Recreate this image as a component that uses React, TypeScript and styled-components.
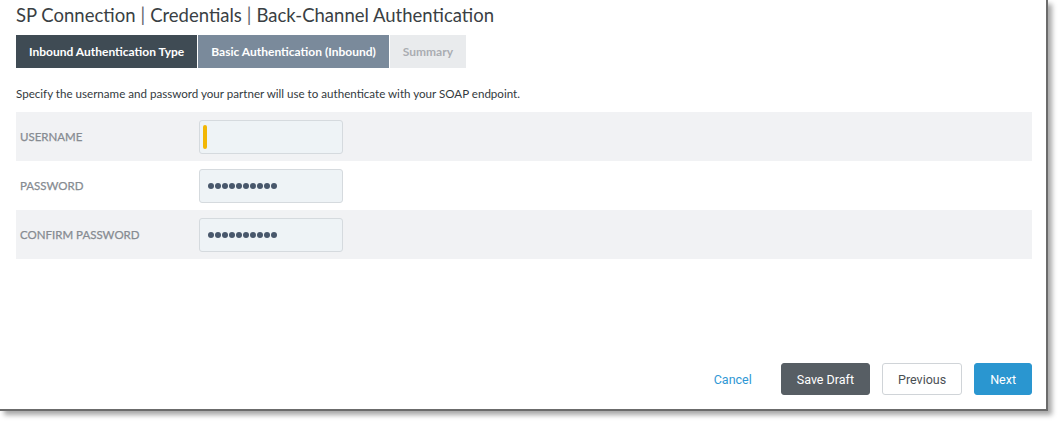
import React from 'react';
import styled, { createGlobalStyle } from 'styled-components';

const GlobalStyle = createGlobalStyle`
  html, body {
    margin: 0;
    padding: 0;
    background: #ffffff;
  }
  body {
    font-family: 'Lato', 'Open Sans', sans-serif;
  }
`;

const Page = styled.div`
  width: 1058px;
  height: 421px;
  overflow: hidden;
`;

const Panel = styled.div`
  box-sizing: border-box;
  width: 1048px;
  height: 411px;
  background: #ffffff;
  border-right: 2px solid #6b6b6b;
  border-bottom: 2px solid #6b6b6b;
  box-shadow: 4px 4px 5px rgba(0, 0, 0, 0.35);
  padding: 0 14px 14px 16px;
  display: flex;
  flex-direction: column;
`;

const Title = styled.h1`
  margin: 3px 0 0;
  font-size: 18.5px;
  font-weight: 400;
  line-height: 24px;
  color: #3a3f44;
`;

const Sep = styled.span`
  color: #5f656b;
  margin: 0 5px;
`;

const Tabs = styled.div`
  display: flex;
  gap: 1px;
  margin-top: 8px;
`;

const Tab = styled.div<{ variant: 'active' | 'current' | 'pending' }>`
  height: 33px;
  padding: 0 13px;
  display: flex;
  align-items: center;
  font-size: 12px;
  font-weight: 700;
  background: ${(p) =>
        p.variant === 'active' ? '#3f4b54' : p.variant === 'current' ? '#7a8a9b' : '#e9ebed'};
  color: ${(p) => (p.variant === 'pending' ? '#a9adb2' : '#ffffff')};
`;

const Intro = styled.p`
  margin: 18px 0 0;
  font-size: 11.6px;
  line-height: 16px;
  color: #333a40;
`;

const Rows = styled.div`
  margin-top: 10px;
  display: flex;
  flex-direction: column;
`;

const Row = styled.div<{ shaded: boolean }>`
  height: 49px;
  display: grid;
  grid-template-columns: 179px 144px;
  align-items: center;
  background: ${(p) => (p.shaded ? '#f1f2f4' : '#ffffff')};
  padding-left: 4px;
`;

const Label = styled.div`
  font-size: 11.5px;
  font-weight: 400;
  color: #868b91;
  text-transform: uppercase;
  -webkit-text-stroke: 0.25px #868b91;
`;

const Field = styled.div`
  box-sizing: border-box;
  width: 144px;
  height: 34px;
  background: #eef3f6;
  border: 1px solid #d5dade;
  border-radius: 3px;
  display: flex;
  align-items: center;
  padding-left: 3px;
`;

const Caret = styled.div`
  width: 4px;
  height: 24px;
  border-radius: 2px;
  background: #f2b705;
`;

const Dots = styled.div`
  display: flex;
  gap: 1px;
  padding-left: 5px;
`;

const Dot = styled.span`
  width: 6px;
  height: 6px;
  border-radius: 50%;
  background: #48576b;
`;

const Footer = styled.div`
  margin-top: auto;
  display: flex;
  justify-content: flex-end;
  align-items: center;
  gap: 12px;
`;

const LinkButton = styled.button`
  border: none;
  background: none;
  font-family: 'Roboto', 'Liberation Sans', sans-serif;
  font-size: 12.5px;
  color: #2f97d4;
  padding: 0;
  margin-right: 17px;
  cursor: pointer;
`;

const Button = styled.button<{ kind: 'dark' | 'light' | 'primary' }>`
  box-sizing: border-box;
  height: 32px;
  padding: 0 15px;
  border-radius: 3px;
  font-family: 'Roboto', 'Liberation Sans', sans-serif;
  font-size: 12.5px;
  cursor: pointer;
  border: 1px solid
    ${(p) => (p.kind === 'dark' ? '#575e64' : p.kind === 'primary' ? '#2a96d0' : '#d0d4d8')};
  background: ${(p) => (p.kind === 'dark' ? '#575e64' : p.kind === 'primary' ? '#2a96d0' : '#ffffff')};
  color: ${(p) => (p.kind === 'light' ? '#4a4f54' : '#ffffff')};
`;

const Password: React.FC = () => (
    <Dots>
        {Array.from({ length: 10 }).map((_, i) => (
            <Dot key={i} />
        ))}
    </Dots>
);

export default function App() {
    return (
        <Page>
            <GlobalStyle />
            <Panel>
                <Title>
                    SP Connection<Sep>|</Sep>Credentials<Sep>|</Sep>Back-Channel Authentication
                </Title>
                <Tabs>
                    <Tab variant="active">Inbound Authentication Type</Tab>
                    <Tab variant="current">Basic Authentication (Inbound)</Tab>
                    <Tab variant="pending">Summary</Tab>
                </Tabs>
                <Intro>
                    Specify the username and password your partner will use to authenticate with your SOAP endpoint.
                </Intro>
                <Rows>
                    <Row shaded>
                        <Label>Username</Label>
                        <Field>
                            <Caret />
                        </Field>
                    </Row>
                    <Row shaded={false}>
                        <Label>Password</Label>
                        <Field>
                            <Password />
                        </Field>
                    </Row>
                    <Row shaded>
                        <Label>Confirm Password</Label>
                        <Field>
                            <Password />
                        </Field>
                    </Row>
                </Rows>
                <Footer>
                    <LinkButton>Cancel</LinkButton>
                    <Button kind="dark">Save Draft</Button>
                    <Button kind="light">Previous</Button>
                    <Button kind="primary">Next</Button>
                </Footer>
            </Panel>
        </Page>
    );
}
